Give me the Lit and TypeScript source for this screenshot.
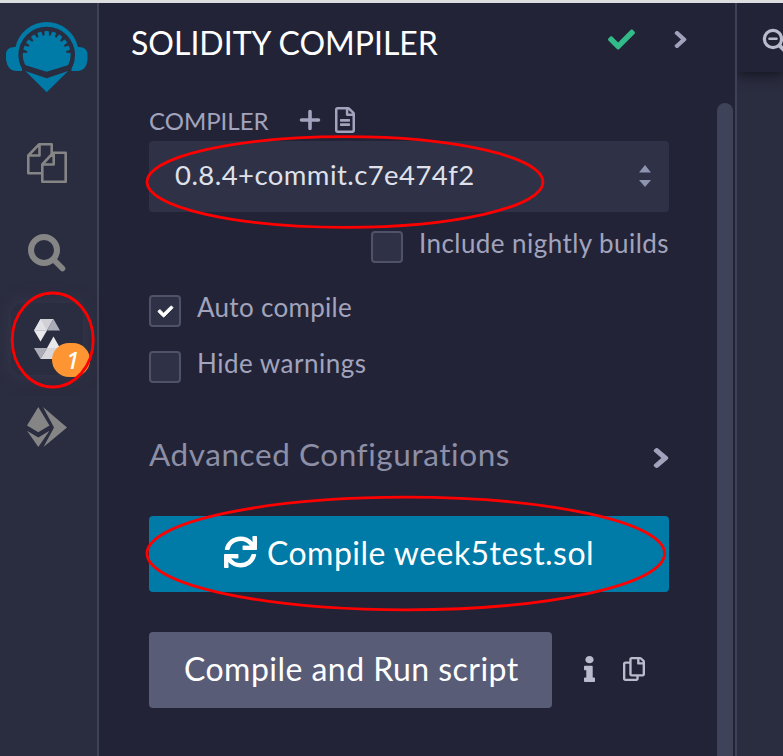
import { LitElement, html, css, svg } from "lit";
import { customElement } from "lit/decorators.js";

const CHEVRON = "M285.476 272.971L91.132 467.314c-9.373 9.373-24.569 9.373-33.941 0l-22.667-22.667c-9.357-9.357-9.375-24.522-.04-33.901L188.505 256 34.484 101.255c-9.335-9.379-9.317-24.544.04-33.901l22.667-22.667c9.373-9.373 24.569-9.373 33.941 0L285.475 239.03c9.373 9.372 9.373 24.568.001 33.941z";
const CHECK = "M173.898 439.404l-166.4-166.4c-9.997-9.997-9.997-26.206 0-36.204l36.203-36.204c9.997-9.998 26.207-9.998 36.204 0L192 312.69 432.095 72.596c9.997-9.997 26.207-9.997 36.204 0l36.203 36.204c9.997 9.997 9.997 26.206 0 36.204l-294.4 294.401c-9.998 9.997-26.207 9.997-36.204-.001z";
const FILE = "M288 248v28c0 6.6-5.4 12-12 12H108c-6.6 0-12-5.4-12-12v-28c0-6.6 5.4-12 12-12h168c6.6 0 12 5.4 12 12zm-12 72H108c-6.6 0-12 5.4-12 12v28c0 6.6 5.4 12 12 12h168c6.6 0 12-5.4 12-12v-28c0-6.6-5.4-12-12-12zm108-188.1V464c0 26.5-21.5 48-48 48H48c-26.5 0-48-21.5-48-48V48C0 21.5 21.5 0 48 0h204.1C264.8 0 277 5.1 286 14.1L369.9 98c9 8.9 14.1 21.2 14.1 33.9zm-128-80V128h76.1L256 51.9zM336 464V176H232c-13.3 0-24-10.7-24-24V48H48v416h288z";
const INFO = "M20 424.229h20V279.771H20c-11.046 0-20-8.954-20-20V212c0-11.046 8.954-20 20-20h112c11.046 0 20 8.954 20 20v212.229h20c11.046 0 20 8.954 20 20V492c0 11.046-8.954 20-20 20H20c-11.046 0-20-8.954-20-20v-47.771c0-11.046 8.954-20 20-20zM96 0C56.235 0 24 32.235 24 72s32.235 72 72 72 72-32.235 72-72S135.764 0 96 0z";
const COPY = "M433.941 65.941l-51.882-51.882A48 48 0 0 0 348.118 0H176c-26.51 0-48 21.49-48 48v48H48c-26.51 0-48 21.49-48 48v320c0 26.51 21.49 48 48 48h224c26.51 0 48-21.49 48-48v-48h80c26.51 0 48-21.49 48-48V99.882a48 48 0 0 0-14.059-33.941zM266 464H54a6 6 0 0 1-6-6V150a6 6 0 0 1 6-6h74v224c0 26.51 21.49 48 48 48h96v42a6 6 0 0 1-6 6zm128-96H182a6 6 0 0 1-6-6V54a6 6 0 0 1 6-6h106v88c0 13.255 10.745 24 24 24h88v202a6 6 0 0 1-6 6zm6-256h-64V48h9.632c1.591 0 3.117.632 4.243 1.757l48.368 48.368a6 6 0 0 1 1.757 4.243V112z";
const SYNC = "M440.65 12.57l4 82.77A247.16 247.16 0 0 0 255.83 8C134.73 8 33.91 94.92 12.29 209.82A12 12 0 0 0 24.09 224h49.05a12 12 0 0 0 11.67-9.26 175.91 175.91 0 0 1 317-56.94l-101.46-4.86a12 12 0 0 0-12.57 12v47.41a12 12 0 0 0 12 12H500a12 12 0 0 0 12-12V12a12 12 0 0 0-12-12h-47.37a12 12 0 0 0-11.98 12.57zM255.83 432a175.61 175.61 0 0 1-146-77.8l101.8 4.87a12 12 0 0 0 12.57-12v-47.4a12 12 0 0 0-12-12H12a12 12 0 0 0-12 12V500a12 12 0 0 0 12 12h47.35a12 12 0 0 0 12-12.6l-4.15-82.57A247.17 247.17 0 0 0 255.83 504c121.11 0 221.93-86.92 243.55-201.82a12 12 0 0 0-11.8-14.18h-49.05a12 12 0 0 0-11.67 9.26A175.86 175.86 0 0 1 255.83 432z";

const icon = (cls: string, viewBox: string, d: string) =>
  html`<svg class=${cls} viewBox=${viewBox} preserveAspectRatio="none"><path d=${d} fill="currentColor" /></svg>`;

/* Angles of the notches around the upper rim of the logo's shell. */
const NOTCHES = [-81, -63, -45, -27, -9, 9, 27, 45, 63, 81];

@customElement("icon-rail")
class IconRail extends LitElement {
  static styles = css`
    :host {
      box-sizing: border-box;
      display: flex;
      flex-direction: column;
      align-items: flex-start;
      width: 99px;
      background: #2a2c3f;
      border-right: 2px solid #3f4158;
      color: #858585;
    }
    svg { display: block; flex: none; overflow: visible; }
    .logo { width: 82px; height: 71px; margin: 19px 0 0 6px; }
    .files { width: 40px; height: 40px; margin: 50px 0 0 27px; }
    .search { width: 38px; height: 38px; margin: 51px 0 0 28px; }
    .active {
      position: relative;
      box-sizing: border-box;
      width: 72px;
      height: 72px;
      margin: 31px 0 0 11px;
      padding: 16px 0 0 23px;
      border-radius: 12px;
      background: #2a2c3f;
      box-shadow: 0 0 16px 2px #35364b;
    }
    .solidity { width: 26px; height: 40px; }
    .badge {
      position: absolute;
      left: 41px;
      top: 40px;
      width: 38px;
      height: 34px;
      border-radius: 17px;
      background: #fd9632;
      color: #fff;
      font: italic 500 24px/34px "Noto Sans", sans-serif;
      text-align: center;
      text-indent: 3px;
    }
    .eth { width: 40px; height: 40px; margin: 32px 0 0 27px; }
  `;
  render() {
    return html`
      <svg class="logo" viewBox="6 22 82 71">
        <path d="M15.500 47A32 32 0 0 1 77.900 47H79Q87.500 47 87.500 55V60Q86 71 78 71H15.500Q8 71 6 60V55Q6 47 14.500 47Z" fill="#007aa6" />
        <circle cx="46.700" cy="55" r="28.300" fill="#2a2c3f" />
        <path d="M25.300 65.300Q22.700 60 22.700 55A24 24 0 0 1 70.700 55Q70.700 60 68.100 65.300L46.700 71.700Z" fill="#007aa6" />
        ${NOTCHES.map((a) => svg`<path d="M44.700 29.500H48.700L47.500 35.300H45.900Z" fill="#2a2c3f" transform="rotate(${a} 46.700 55)" />`)}
        <path d="M22 66.500L25.300 65.600 46.700 72.500 68.100 65.600 71.500 66.500V72L46.700 80 22 72Z" fill="#2a2c3f" />
        <path d="M25.300 71L46.700 78.300 68.100 71 46.700 92.300Z" fill="#007aa6" />
      </svg>
      <svg class="files" viewBox="0 0 40 40" fill="none" stroke="currentColor" stroke-width="2.600" stroke-linejoin="round">
        <path d="M14.500 30.300H1.300V12.500L12 1.300H24.700V14M1.300 12.500H12.500V1.300" />
        <path d="M26 9.800H38.700V38.700H15.300V21.500ZM15.300 21.500H26.700V9.800" />
      </svg>
      <svg class="search" viewBox="0 0 38 38" fill="none" stroke="currentColor">
        <circle cx="16" cy="16" r="13" stroke-width="6" />
        <path d="M26 26L34.500 34.500" stroke-width="5.600" stroke-linecap="round" />
      </svg>
      <div class="active">
        <svg class="solidity" viewBox="0 0 26 40">
          <path d="M6.500 0H19.500L13 11.500H0Z" fill="#d0d0d6" />
          <path d="M19.500 0L26 11.500H13Z" fill="#acacb8" />
          <path d="M0 11.500H13L6.500 22.500Z" fill="#e9e9ed" />
          <path d="M6.500 0L13 11.500H0Z" fill="#e2e2e6" />
          <path d="M13 29L19.500 17.500 26 29Z" fill="#e9e9ed" />
          <path d="M0 29H13L6.500 40Z" fill="#acacb8" />
          <path d="M13 29H26L19.500 40H6.500Z" fill="#d6d6db" />
        </svg>
        <span class="badge">1</span>
      </div>
      <svg class="eth" viewBox="0 0 40 40" fill="currentColor">
        <path d="M11.300 0L22.500 18.500 11.300 25.300 0 18.500Z" />
        <path d="M0 23.800L11.300 30.500 22.500 23.800 11.300 40Z" />
        <path d="M16 0L40 20.500 16.500 40 27 20.500Z" />
      </svg>
    `;
  }
}

@customElement("compiler-panel")
class CompilerPanel extends LitElement {
  static styles = css`
    :host {
      display: flex;
      width: 636px;
      background: #222336;
      color: #a2a3bd;
      font-family: Lato, sans-serif;
      white-space: nowrap;
    }
    svg { display: block; flex: none; overflow: visible; }
    .main { width: 570px; display: flex; flex-direction: column; }
    .head { display: flex; height: 97px; padding-left: 32px; }
    .title { flex: none; width: 477px; margin-top: 20px; font-size: 32px; line-height: 40px; color: #fff; }
    .ok { width: 27px; height: 27px; margin-top: 23px; color: #32ba89; }
    .collapse { width: 13px; height: 19px; margin: 27px 0 0 39px; }
    .collapse, .expand, .tick { stroke: currentColor; stroke-width: 28px; }
    .body { display: flex; flex-direction: column; padding: 6px 0 0 50px; width: 520px; }
    .label { display: flex; height: 35px; }
    .label-text { width: 151px; font-size: 24px; line-height: 30px; }
    .plus { width: 20px; height: 20px; margin-top: 4px; }
    .doc { width: 20px; height: 26px; margin: 1px 0 0 15px; }
    .select {
      box-sizing: border-box;
      display: flex;
      justify-content: space-between;
      height: 71px;
      padding: 0 18px 0 26px;
      border-radius: 4px;
      background: #2f3146;
      color: #dfe1ea;
    }
    .version { font-size: 27.500px; line-height: 68px; letter-spacing: 0.440px; }
    .arrows { width: 12px; height: 22px; margin-top: 24px; color: #8c94b0; }
    .row { display: flex; gap: 16px; height: 32px; font-size: 26px; line-height: 32px; letter-spacing: 0.440px; }
    .row span { margin-top: -4px; }
    .nightly { margin: 19px 0 0 222px; }
    .auto { margin-top: 32px; letter-spacing: 0.300px; }
    .hide { margin-top: 24px; letter-spacing: 0.500px; }
    .box {
      box-sizing: border-box;
      display: flex;
      flex: none;
      align-items: center;
      justify-content: center;
      width: 32px;
      height: 32px;
      border: 2px solid #50526a;
      border-radius: 4px;
      background: #2f3146;
      color: #fff;
    }
    .tick { width: 15px; height: 15px; }
    .advanced { display: flex; justify-content: space-between; height: 40px; margin-top: 51px; font-size: 31.500px; line-height: 40px; letter-spacing: 0.570px; color: #8c8fa6; }
    .expand { width: 16px; height: 22px; margin: 13px 0 0 0; color: #a2a3bd; }
    .btn { box-sizing: border-box; display: flex; height: 76px; border-radius: 4px; color: #fff; font-size: 32px; line-height: 74px; letter-spacing: 0.460px; }
    .primary { margin-top: 42px; padding-left: 75px; background: #007aa6; }
    .sync { width: 33px; height: 32px; margin: 20px 10px 0 0; }
    .actions { display: flex; margin-top: 40px; }
    .secondary { width: 403px; padding-left: 35px; background: #595c76; }
    .info { width: 11px; height: 26px; margin: 24px 0 0 32px; color: #babbcc; }
    .copy { width: 22px; height: 24px; margin: 25px 0 0 28px; color: #babbcc; }
    .scroll { width: 16px; margin: 100px 0 0 48px; border-radius: 8px 8px 0 0; background: #3f4359; }
  `;
  render() {
    return html`
      <div class="main">
        <div class="head">
          <span class="title">SOLIDITY COMPILER</span>
          ${icon("ok", "0 0 512 512", CHECK)}
          ${icon("collapse", "0 0 320 512", CHEVRON)}
        </div>
        <div class="body">
          <div class="label">
            <span class="label-text">COMPILER</span>
            <svg class="plus" viewBox="0 0 20 20"><path d="M10 1.500V18.500M1.500 10H18.500" stroke="currentColor" stroke-width="3.600" stroke-linecap="round" /></svg>
            ${icon("doc", "0 0 384 512", FILE)}
          </div>
          <div class="select">
            <span class="version">0.8.4+commit.c7e474f2</span>
            <svg class="arrows" viewBox="0 0 12 22" fill="currentColor"><path d="M0 7.500L6 0 12 7.500ZM0 15L6 22 12 15Z" /></svg>
          </div>
          <div class="row nightly"><i class="box"></i><span>Include nightly builds</span></div>
          <div class="row auto"><i class="box">${icon("tick", "0 0 512 512", CHECK)}</i><span>Auto compile</span></div>
          <div class="row hide"><i class="box"></i><span>Hide warnings</span></div>
          <div class="advanced"><span>Advanced Configurations</span>${icon("expand", "0 0 320 512", CHEVRON)}</div>
          <div class="btn primary">${icon("sync", "0 0 512 512", SYNC)}<span>Compile week5test.sol</span></div>
          <div class="actions">
            <div class="btn secondary"><span>Compile and Run script</span></div>
            ${icon("info", "0 0 192 512", INFO)}
            ${icon("copy", "0 0 448 512", COPY)}
          </div>
        </div>
      </div>
      <div class="scroll"></div>
    `;
  }
}

@customElement("editor-edge")
class EditorEdge extends LitElement {
  static styles = css`
    :host { display: block; flex: 1; min-width: 0; overflow: hidden; border-left: 2px solid #3f4158; background: #2a2c3f; }
    .bar { height: 69px; background: #222336; box-shadow: 0 2px 12px #11121c; }
    .zoom { display: block; width: 26px; height: 26px; padding: 25px 0 0 25px; }
  `;
  render() {
    return html`<div class="bar">
      <svg class="zoom" viewBox="0 0 26 26" fill="none" stroke="#babbcc" stroke-linecap="round">
        <circle cx="11" cy="11" r="8.600" stroke-width="3.200" />
        <path d="M7.500 10.700H14.500" stroke-width="2.600" />
        <path d="M18 18L23 23" stroke-width="4" />
      </svg>
    </div>`;
  }
}

@customElement("app-root")
class AppRoot extends LitElement {
  static styles = css`
    :host {
      position: relative;
      box-sizing: border-box;
      display: flex;
      width: 783px;
      height: 756px;
      overflow: hidden;
      border-top: 3px solid #dcdddf;
      background: #222336;
    }
    .marks { position: absolute; left: 0; top: -3px; width: 783px; height: 756px; }
  `;
  render() {
    return html`
      <icon-rail></icon-rail>
      <compiler-panel></compiler-panel>
      <editor-edge></editor-edge>
      <svg class="marks" viewBox="0 0 783 756" fill="none" stroke="#f00" stroke-width="2.800">
        <ellipse cx="345" cy="182" rx="198" ry="45.300" />
        <ellipse cx="405.800" cy="553.500" rx="258.800" ry="56.300" />
        <ellipse cx="52.700" cy="340" rx="40.500" ry="47" />
      </svg>
    `;
  }
}
